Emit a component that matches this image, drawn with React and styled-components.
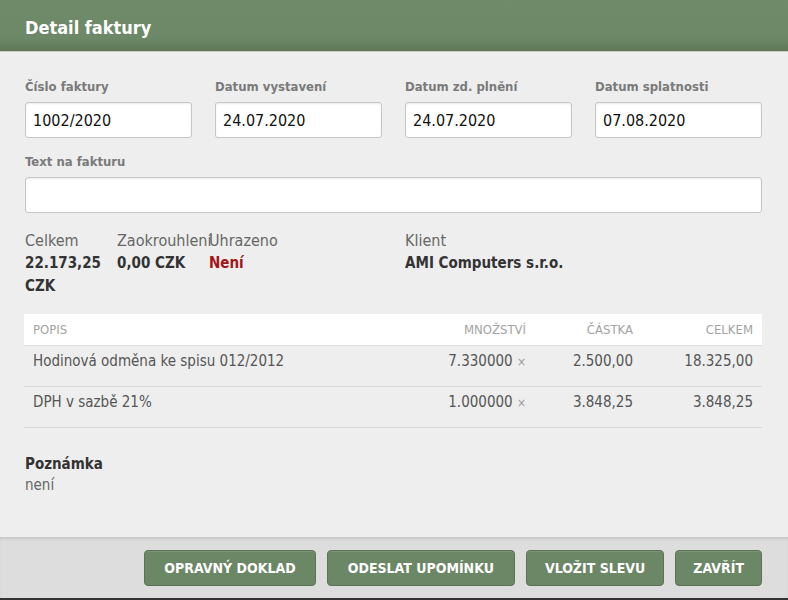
import React from "react";
import styled, { createGlobalStyle } from "styled-components";

const GlobalStyle = createGlobalStyle`
  html, body {
    margin: 0;
    padding: 0;
    background: #eeeeee;
  }
  body {
    font-family: "DejaVu Sans Condensed", "DejaVu Sans", sans-serif;
    color: #333333;
  }
`;

const Dialog = styled.div`
  width: 788px;
  height: 600px;
  display: flex;
  flex-direction: column;
  background: #eeeeee;
  box-sizing: border-box;
  border-bottom: 2px solid #333333;
`;

const Header = styled.div`
  height: 51px;
  flex-shrink: 0;
  display: flex;
  align-items: center;
  padding: 0 25px;
  background: linear-gradient(to bottom, #6f8b69 0%, #6c8866 75%, #5d7657 100%);
  border-bottom: 1px solid #c9cfc6;
`;

const Title = styled.h1`
  margin: 4px 0 0;
  font-size: 18px;
  font-weight: bold;
  color: #ffffff;
`;

const Body = styled.div`
  flex: 1;
  padding: 26px 26px 0 25px;
`;

const FieldGrid = styled.div`
  display: grid;
  grid-template-columns: repeat(4, 167px);
  column-gap: 23px;
`;

const Field = styled.div`
  display: flex;
  flex-direction: column;
`;

const Label = styled.label`
  font-size: 13px;
  font-weight: bold;
  color: #7a7a7a;
  line-height: 18px;
  margin-bottom: 6px;
`;

const Input = styled.input`
  box-sizing: border-box;
  width: 100%;
  height: 36px;
  padding: 0 7px;
  border: 1px solid #c6c6c6;
  border-radius: 3px;
  background: #ffffff;
  box-shadow: inset 0 1px 2px rgba(0, 0, 0, 0.08);
  font-family: inherit;
  font-size: 16px;
  color: #111111;
  outline: none;
`;

const WideField = styled(Field)`
  margin-top: 15px;
`;

const Summary = styled.div`
  display: flex;
  margin-top: 17px;
`;

const SummaryItem = styled.div`
  width: ${p => p.$width}px;
  flex-shrink: 0;
  display: flex;
  flex-direction: column;
`;

const SummaryLabel = styled.span`
  font-size: 16px;
  color: #666666;
  line-height: 22px;
  white-space: nowrap;
`;

const SummaryValue = styled.span`
  font-size: 15px;
  font-weight: bold;
  color: ${p => (p.$alert ? "#a31515" : "#333333")};
  line-height: 23px;
  padding-right: ${p => (p.$alert ? "0" : "10px")};
`;

const Table = styled.table`
  width: 738px;
  margin-top: 16px;
  margin-left: -1px;
  border-collapse: collapse;
  table-layout: fixed;
  font-size: 15px;
`;

const Th = styled.th`
  height: 31px;
  padding: 0 9px;
  background: #ffffff;
  border-bottom: 1px solid #dddddd;
  font-size: 13px;
  font-weight: normal;
  color: #a3a3a3;
  text-align: ${p => p.$align || "left"};
  text-transform: uppercase;
`;

const Td = styled.td`
  height: 34px;
  padding: 6px 9px 0;
  vertical-align: top;
  line-height: 18px;
  border-bottom: 1px solid #d8d8d8;
  color: #555555;
  text-align: ${p => p.$align || "left"};
  white-space: nowrap;
`;

const Times = styled.span`
  color: #999999;
  font-size: 12px;
`;

const Note = styled.div`
  margin-top: 25px;
  display: flex;
  flex-direction: column;
`;

const NoteTitle = styled.span`
  font-size: 15px;
  font-weight: bold;
  color: #333333;
  line-height: 22px;
`;

const NoteText = styled.span`
  font-size: 15px;
  color: #666666;
  line-height: 20px;
`;

const Footer = styled.div`
  height: 61px;
  flex-shrink: 0;
  box-sizing: border-box;
  display: flex;
  justify-content: flex-end;
  align-items: center;
  gap: 11px;
  padding: 1px 26px 0 0;
  background: #dddddd;
  box-shadow: inset 0 3px 3px -1px rgba(0, 0, 0, 0.1);
`;

const Button = styled.button`
  height: 36px;
  padding: 0 ${p => p.$pad || 19}px;
  border: 1px solid #5a7353;
  border-radius: 4px;
  background: #6b8765;
  box-shadow: inset 0 1px 0 rgba(255, 255, 255, 0.12);
  font-family: inherit;
  font-size: 14px;
  font-weight: bold;
  color: #ffffff;
  text-transform: uppercase;
  cursor: pointer;
`;

const fields = [
  ["Číslo faktury", "1002/2020"],
  ["Datum vystavení", "24.07.2020"],
  ["Datum zd. plnění", "24.07.2020"],
  ["Datum splatnosti", "07.08.2020"],
];

const items = [
  { name: "Hodinová odměna ke spisu 012/2012", qty: "7.330000", price: "2.500,00", total: "18.325,00" },
  { name: "DPH v sazbě 21%", qty: "1.000000", price: "3.848,25", total: "3.848,25" },
];

export default function App() {
  return (
    <>
      <GlobalStyle />
      <Dialog>
        <Header>
          <Title>Detail faktury</Title>
        </Header>
        <Body>
          <FieldGrid>
            {fields.map(([label, value]) => (
              <Field key={label}>
                <Label>{label}</Label>
                <Input defaultValue={value} />
              </Field>
            ))}
          </FieldGrid>
          <WideField>
            <Label>Text na fakturu</Label>
            <Input defaultValue="" />
          </WideField>
          <Summary>
            <SummaryItem $width={92}>
              <SummaryLabel>Celkem</SummaryLabel>
              <SummaryValue>22.173,25 CZK</SummaryValue>
            </SummaryItem>
            <SummaryItem $width={92}>
              <SummaryLabel>Zaokrouhlení</SummaryLabel>
              <SummaryValue>0,00 CZK</SummaryValue>
            </SummaryItem>
            <SummaryItem $width={196}>
              <SummaryLabel>Uhrazeno</SummaryLabel>
              <SummaryValue $alert>Není</SummaryValue>
            </SummaryItem>
            <SummaryItem $width={300}>
              <SummaryLabel>Klient</SummaryLabel>
              <SummaryValue>AMI Computers s.r.o.</SummaryValue>
            </SummaryItem>
          </Summary>
          <Table>
            <colgroup>
              <col />
              <col style={{ width: 110 }} />
              <col style={{ width: 107 }} />
              <col style={{ width: 120 }} />
            </colgroup>
            <thead>
              <tr>
                <Th>Popis</Th>
                <Th $align="right">Množství</Th>
                <Th $align="right">Částka</Th>
                <Th $align="right">Celkem</Th>
              </tr>
            </thead>
            <tbody>
              {items.map(item => (
                <tr key={item.name}>
                  <Td>{item.name}</Td>
                  <Td $align="right">
                    {item.qty} <Times>×</Times>
                  </Td>
                  <Td $align="right">{item.price}</Td>
                  <Td $align="right">{item.total}</Td>
                </tr>
              ))}
            </tbody>
          </Table>
          <Note>
            <NoteTitle>Poznámka</NoteTitle>
            <NoteText>není</NoteText>
          </Note>
        </Body>
        <Footer>
          <Button>Opravný doklad</Button>
          <Button $pad={20}>Odeslat upomínku</Button>
          <Button $pad={18}>Vložit slevu</Button>
          <Button $pad={17}>Zavřít</Button>
        </Footer>
      </Dialog>
    </>
  );
}
